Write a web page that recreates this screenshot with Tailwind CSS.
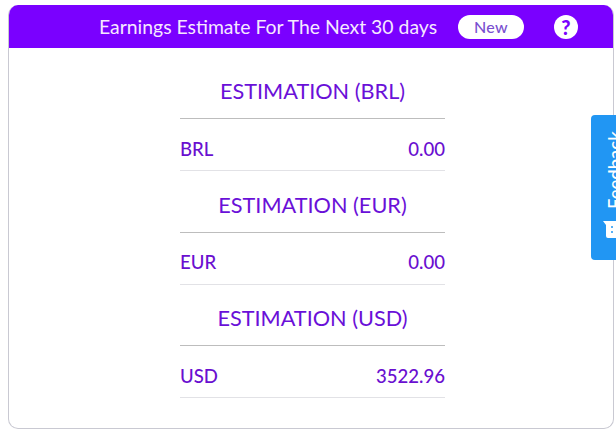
<!DOCTYPE html>
<html lang="en">
<head>
    <meta charset="UTF-8">
    <title>Earnings Estimate</title>
    <script src="https://cdn.jsdelivr.net/npm/@tailwindcss/browser@4"></script>
</head>
<body class="w-[616px] h-[431px] overflow-hidden relative bg-white font-['Lato',sans-serif]">

    <!-- Card -->
    <div class="ml-2 mt-[5px] w-[606px] h-[424px] border border-[#c9c9d2] border-t-0 rounded-[10px] overflow-hidden bg-white">
        <div class="h-[43px] bg-[#7a00ff] flex items-center text-white">
            <span class="ml-[90px] w-[339px] text-[19.4px] whitespace-nowrap text-[#f6e8ff]">Earnings Estimate For The Next 30 days</span>
            <span class="ml-[20px] w-[66px] h-6 rounded-full bg-white text-[#7a4fd0] text-[16px] font-medium tracking-wide flex items-center justify-center">New</span>
            <span class="ml-[30px] w-6 h-6 rounded-full bg-white text-[#7a00ff] text-[20px] font-black flex items-center justify-center">?</span>
        </div>

        <div class="w-[265px] ml-[171px] pt-[9px] text-[#6a0fd0]">
            <div class="h-[62px] border-b border-[#bdbdbd] flex items-center justify-center text-[21.7px] text-[#6a10d8] pt-[8px]">ESTIMATION (BRL)</div>
            <div class="h-[52px] border-b border-[#e2e2e6] flex items-center justify-between text-[18.6px] font-medium pt-[10px]">
                <span>BRL</span><span>0.00</span>
            </div>
            <div class="h-[62px] border-b border-[#bdbdbd] flex items-center justify-center text-[21.7px] text-[#6a10d8] pt-[8px]">ESTIMATION (EUR)</div>
            <div class="h-[52px] border-b border-[#e2e2e6] flex items-center justify-between text-[18.6px] font-medium pt-[8px]">
                <span>EUR</span><span>0.00</span>
            </div>
            <div class="h-[61px] border-b border-[#bdbdbd] flex items-center justify-center text-[21.7px] text-[#6a10d8] pt-[6px]">ESTIMATION (USD)</div>
            <div class="h-[52px] border-b border-[#e2e2e6] flex items-center justify-between text-[18.6px] font-medium pt-[10px]">
                <span>USD</span><span>3522.96</span>
            </div>
        </div>
    </div>

    <!-- Feedback tab, runs off the right edge of the window -->
    <div class="absolute left-[591px] top-[115px] w-[50px] h-[145px] bg-[#2196f3] rounded-[4px] overflow-hidden">
        <span class="absolute left-[-26px] top-[32px] w-[100px] h-[24px] -rotate-90 text-[18.5px] font-medium text-white leading-6 whitespace-nowrap text-left">Feedback</span>
        <svg class="absolute left-[12px] top-[105px]" width="16" height="19" viewBox="0 0 16 19">
            <path d="M0 1 H16 V18 H5 Q3 18 3 16 V5 Z" fill="#fff"/>
            <circle cx="9" cy="7" r="1" fill="#2196f3"/>
            <circle cx="9" cy="12" r="1" fill="#2196f3"/>
        </svg>
    </div>

</body>
</html>
